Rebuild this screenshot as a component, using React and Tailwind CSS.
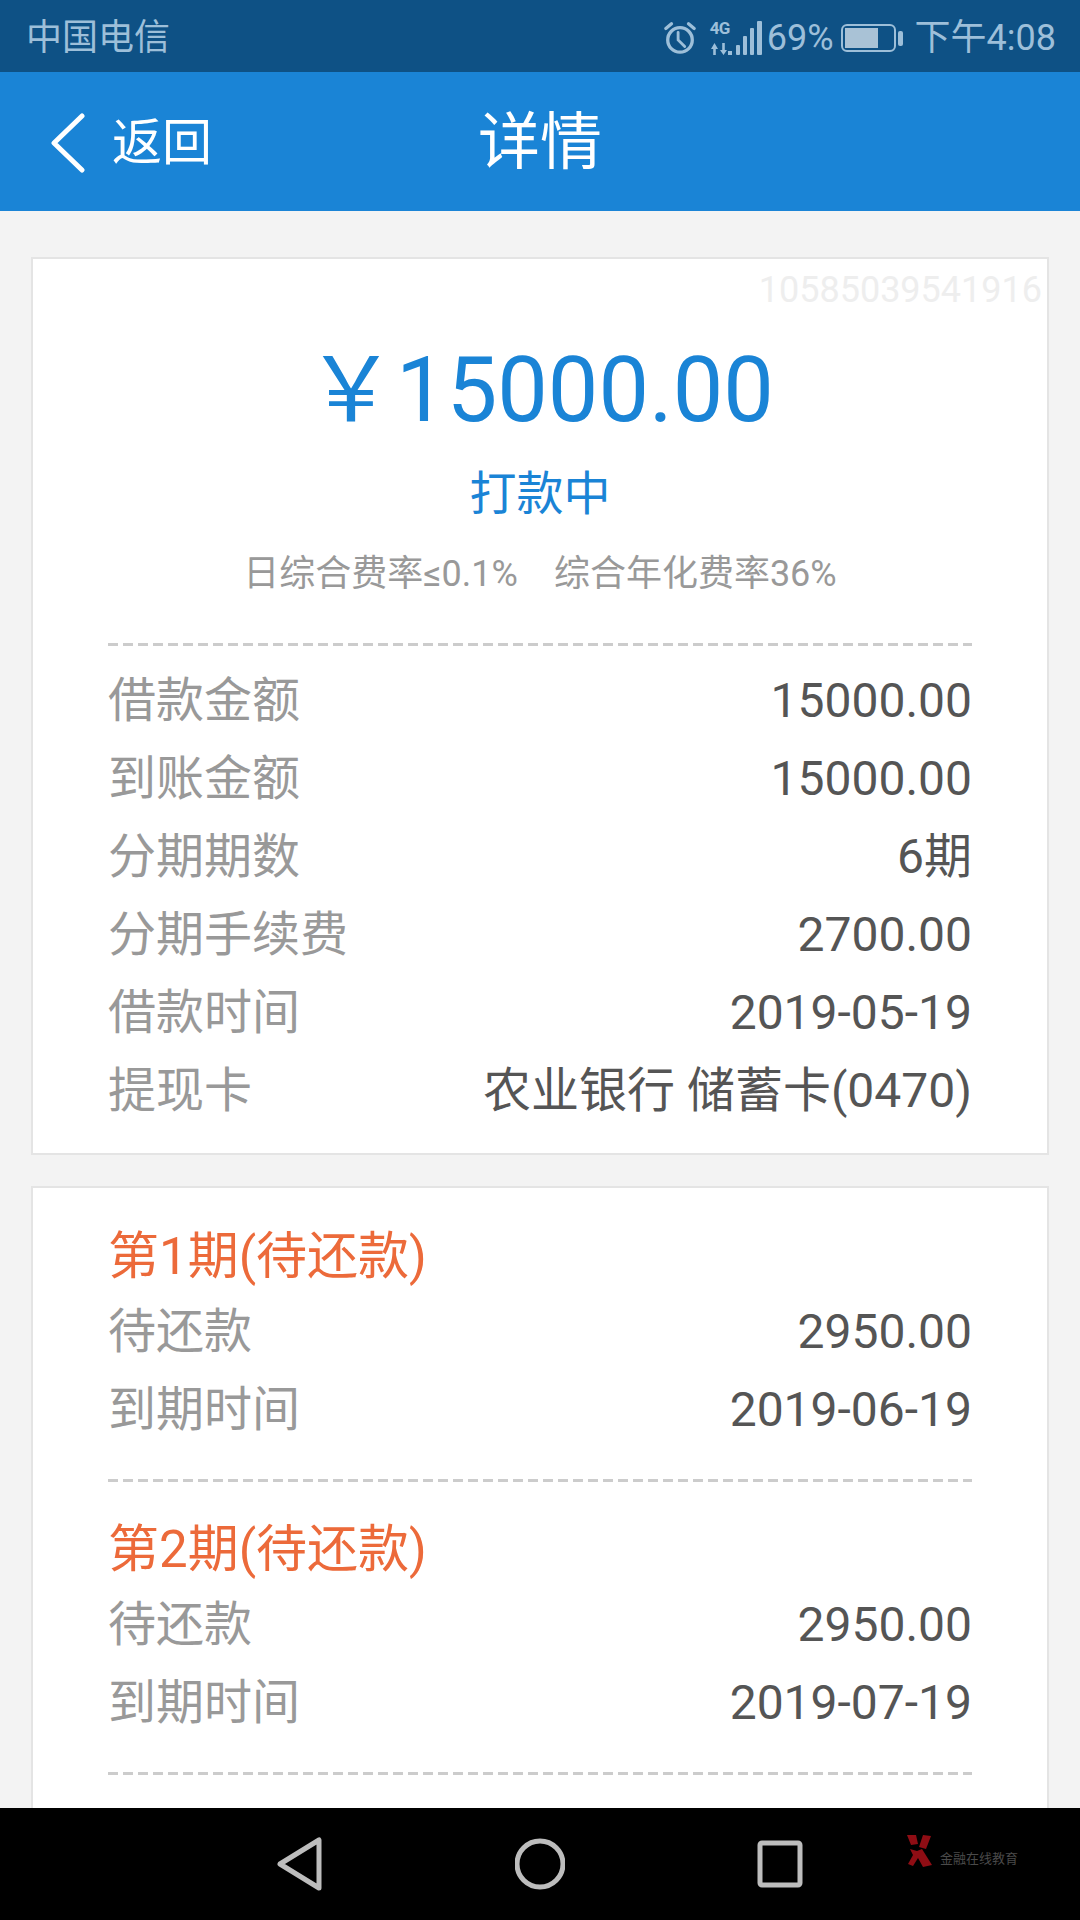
import React from 'react';

const summaryRows = [
  ['借款金额', '15000.00'],
  ['到账金额', '15000.00'],
  ['分期期数', '6期'],
  ['分期手续费', '2700.00'],
  ['借款时间', '2019-05-19'],
  ['提现卡', '农业银行 储蓄卡(0470)'],
];

const periods = [
  { title: '第1期(待还款)', amount: '2950.00', date: '2019-06-19' },
  { title: '第2期(待还款)', amount: '2950.00', date: '2019-07-19' },
];

const Row = ({ label, value }) => (
  <div className="flex h-[78px] items-center justify-between text-[48px]">
    <span className="text-[#999999]">{label}</span>
    <span className="text-[#555555]">{value}</span>
  </div>
);

const Dashed = () => (
  <div className="h-[3px] bg-[repeating-linear-gradient(90deg,#cccccc_0,#cccccc_10px,transparent_10px,transparent_15px)]" />
);

const StatusBar = () => (
  <div className="flex h-[72px] shrink-0 items-center justify-between bg-[#0e5185] pl-[26px] pr-[24px] pt-[3px] text-[#9dbfd9]">
    <span className="text-[36px] leading-none">中国电信</span>
    <div className="flex items-center">
      {/* alarm */}
      <svg width="34" height="34" viewBox="0 0 36 36" fill="none" stroke="#9dbfd9" strokeWidth="3.5" strokeLinecap="round">
        <circle cx="18" cy="20" r="13" />
        <path d="M16 12 L16 20 L23 27" strokeWidth="3" />
        <path d="M3 8 L9 3 M33 8 L27 3" />
      </svg>
      {/* 4G + signal */}
      <div className="relative ml-[13px] h-[34px] w-[52px]">
        <span className="absolute left-0 top-[-2px] text-[17px] font-bold leading-[18px] tracking-tighter">4G</span>
        <svg className="absolute inset-0" width="52" height="34" viewBox="0 0 52 34" fill="#9dbfd9">
          <path d="M1 28 L4.5 22 L8 28 L5.8 28 L5.8 34 L3.2 34 L3.2 28 Z" />
          <path d="M10 29 L13.5 34 L17 29 L14.8 29 L14.8 22 L12.2 22 L12.2 29 Z" />
          <rect x="18" y="30" width="4" height="4" />
          <rect x="26" y="24" width="4" height="10" rx="1" />
          <rect x="33" y="15" width="4" height="19" rx="1" />
          <rect x="40" y="7" width="4" height="27" rx="1" />
          <rect x="47" y="0" width="5" height="34" rx="1" />
        </svg>
      </div>
      <span className="ml-[5px] text-[36px] leading-none">69%</span>
      <svg className="ml-[7px]" width="62" height="30" viewBox="0 0 62 30" fill="none">
        <rect x="1" y="2" width="53" height="26" rx="5" stroke="#9dbfd9" strokeWidth="2" />
        <rect x="4" y="5" width="33" height="20" fill="#a9c2d6" />
        <rect x="57" y="8" width="5" height="15" rx="2" fill="#9dbfd9" />
      </svg>
      <span className="ml-[12px] text-[36px] leading-none">下午4:08</span>
    </div>
  </div>
);

const Header = () => (
  <div className="grid h-[139px] shrink-0 grid-cols-3 items-center bg-[#1a84d6] pt-[3px] text-white">
    <div className="flex items-center pl-[50px]">
      <svg width="36" height="60" viewBox="0 0 36 60" fill="none" stroke="white" strokeWidth="5" strokeLinecap="round" strokeLinejoin="round">
        <path d="M32 3 L4 30 L32 57" />
      </svg>
      <span className="ml-[26px] text-[50px] leading-none">返回</span>
    </div>
    <div className="text-center text-[62px] leading-none">详情</div>
    <div />
  </div>
);

const NavBar = () => (
  <div className="relative flex h-[112px] shrink-0 items-center justify-center gap-[190px] bg-black">
    <svg width="50" height="54" viewBox="0 0 50 54" fill="none" stroke="#bdbdbd" strokeWidth="5" strokeLinejoin="round">
      <path d="M44 3 L44 51 L5 27 Z" />
    </svg>
    <svg width="50" height="54" viewBox="0 0 50 54" fill="none" stroke="#bdbdbd" strokeWidth="5">
      <circle cx="25" cy="27" r="23" />
    </svg>
    <svg width="50" height="54" viewBox="0 0 50 54" fill="none" stroke="#bdbdbd" strokeWidth="5" strokeLinejoin="round">
      <rect x="5" y="6" width="40" height="42" rx="2" />
    </svg>
    {/* watermark logo */}
    <div className="absolute left-[904px] top-[26px] flex items-end">
      <svg width="30" height="33" viewBox="0 0 30 33" fill="#8f0d14">
        <path d="M3 1 L12 1 L14 10 L7 11 Z" />
        <path d="M19 1 L27 2 L22 15 L15 13 Z" />
        <path d="M6 15 L13 17 L18 15 L28 31 L19 33 L14 24 L9 32 L4 30 L9 21 Z" />
      </svg>
      <span className="ml-[6px] text-[13px] leading-[16px] text-[#4a4a4a]">金融在线教育</span>
    </div>
  </div>
);

const App = () => {
  return (
    <div className="flex h-[1920px] w-[1080px] flex-col overflow-hidden bg-[#f3f3f3] font-['Roboto','Noto_Sans_CJK_SC',sans-serif]">
      <StatusBar />
      <Header />

      <div className="flex-1 overflow-hidden px-[31px] pt-[46px]">
        <section className="border-2 border-[#e4e4e4] bg-white px-[75px] pb-[23px]">
          <div className="-mr-[70px] pt-[9px] text-right text-[36px] leading-[44px] text-[#eeeeee]">10585039541916</div>
          <div className="mt-[20px] text-center text-[90px] leading-[100px] text-[#1a84d6]">
            <span className="font-['Noto_Sans_CJK_SC',sans-serif]">￥</span>15000.00
          </div>
          <div className="mt-[23px] text-center text-[47px] leading-[60px] text-[#1a84d6]">打款中</div>
          <div className="mt-[28px] text-center text-[36px] leading-[44px] text-[#999999]">
            日综合费率≤0.1%<span className="ml-[36px]">综合年化费率36%</span>
          </div>
          <div className="mt-[47px] mb-[16px]">
            <Dashed />
          </div>
          {summaryRows.map(([label, value]) => (
            <Row key={label} label={label} value={value} />
          ))}
        </section>

        <section className="mt-[31px] border-2 border-[#e4e4e4] bg-white px-[75px] pt-[33px] pb-[100px]">
          {periods.map((p) => (
            <div key={p.date} className="mb-[32px]">
              <div className="h-[72px] text-[51px] leading-[72px] text-[#ec6a3a]">{p.title}</div>
              <Row label="待还款" value={p.amount} />
              <Row label="到期时间" value={p.date} />
              <div className="mt-[30px]">
                <Dashed />
              </div>
            </div>
          ))}
        </section>
      </div>

      <NavBar />
    </div>
  );
};

export default App;
